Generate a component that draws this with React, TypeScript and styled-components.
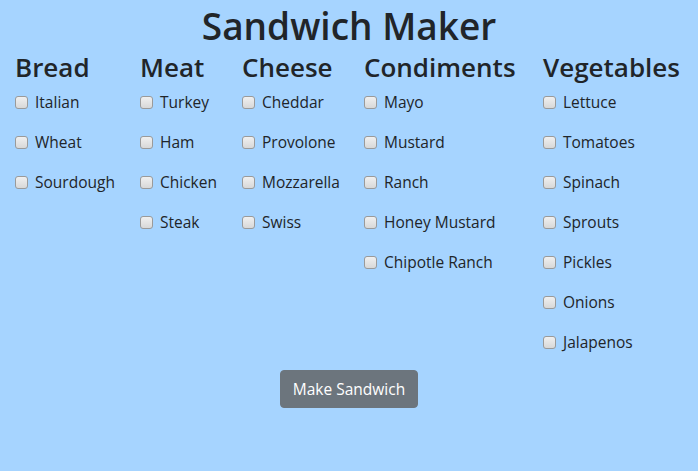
import React from "react";
import styled, { createGlobalStyle } from "styled-components";

const GlobalStyle = createGlobalStyle`
  html, body {
    margin: 0;
    padding: 0;
    background: #a6d4ff;
  }

  body {
    font-family: "Open Sans", "Noto Sans", sans-serif;
    color: #212529;
  }
`;

const Page = styled.div`
  display: flex;
  flex-direction: column;
  align-items: center;
`;

const Title = styled.h1`
  margin: 0 0 -2px;
  font-size: 37px;
  line-height: 52px;
  font-weight: 600;
`;

const Columns = styled.div`
  display: flex;
  justify-content: center;
  width: 100%;
`;

const Column = styled.div<{ $width: number }>`
  width: ${p => p.$width}px;
  display: flex;
  flex-direction: column;
  gap: 16px;
`;

const Heading = styled.h3`
  margin: 0 0 -10px;
  font-size: 26px;
  line-height: 34px;
  font-weight: 600;
  white-space: nowrap;
`;

const Option = styled.label`
  display: flex;
  align-items: center;
  height: 24px;
  font-size: 15.5px;
  line-height: 24px;
  white-space: nowrap;
`;

const Box = styled.input.attrs({ type: "checkbox" })`
  appearance: none;
  box-sizing: border-box;
  width: 13px;
  height: 13px;
  margin: 0 7px 0 0;
  border: 1px solid #9a9a9a;
  border-radius: 3px;
  background: linear-gradient(#f0f0f0, #d8d8d8);

  &:checked {
    background: linear-gradient(#e8f2fc, #c6def6);
  }
`;

const MakeButton = styled.button`
  margin-top: 16px;
  padding: 6px 12px;
  height: 38px;
  border: 1px solid #6c757d;
  border-radius: 4px;
  background: #6c757d;
  color: #fff;
  font-family: inherit;
  font-size: 15.5px;
  line-height: 24px;
  cursor: pointer;
`;

const groups = [
  { name: "Bread", width: 125, items: ["Italian", "Wheat", "Sourdough"] },
  { name: "Meat", width: 102, items: ["Turkey", "Ham", "Chicken", "Steak"] },
  { name: "Cheese", width: 122, items: ["Cheddar", "Provolone", "Mozzarella", "Swiss"] },
  {
    name: "Condiments",
    width: 179,
    items: ["Mayo", "Mustard", "Ranch", "Honey Mustard", "Chipotle Ranch"],
  },
  {
    name: "Vegetables",
    width: 140,
    items: ["Lettuce", "Tomatoes", "Spinach", "Sprouts", "Pickles", "Onions", "Jalapenos"],
  },
];

export default function App() {
  return (
    <Page>
      <GlobalStyle />
      <Title>Sandwich Maker</Title>
      <Columns>
        {groups.map(group => (
          <Column key={group.name} $width={group.width}>
            <Heading>{group.name}</Heading>
            {group.items.map(item => (
              <Option key={item}>
                <Box />
                {item}
              </Option>
            ))}
          </Column>
        ))}
      </Columns>
      <MakeButton>Make Sandwich</MakeButton>
    </Page>
  );
}
